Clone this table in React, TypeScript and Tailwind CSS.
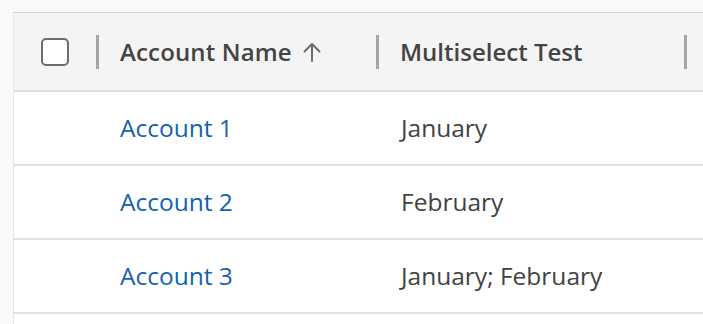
const rows = [
  { name: 'Account 1', months: 'January' },
  { name: 'Account 2', months: 'February' },
  { name: 'Account 3', months: 'January; February' },
];

function SortUpIcon() {
  return (
    <svg width="20" height="22" viewBox="0 0 20 22" fill="none" aria-hidden="true">
      <path d="M10 20V3M2.5 10.5L10 3l7.5 7.5" stroke="#6b6b6b" strokeWidth="2" strokeLinecap="round" strokeLinejoin="round" />
    </svg>
  );
}

function Separator() {
  return <span className="h-[34px] w-[3px] shrink-0 bg-[#a3a3a3]" />;
}

export default function App() {
  return (
    <div className="h-[324px] w-[703px] overflow-hidden bg-[#f8f9fa] pl-[13px] pt-[12px] font-['Open_Sans',sans-serif]">
      <div className="h-full overflow-hidden border-l border-t border-l-[#e6e6e6] border-t-[#d4d4d4] bg-white">
        <div className="flex h-[79px] items-center border-b-2 border-[#e0e0e0] bg-[#f4f4f4] text-[24px] font-semibold text-[#444444]">
          <div className="flex w-[85px] shrink-0 items-center justify-between pl-[27px]">
            <span className="h-[28px] w-[28px] rounded-[5px] border-2 border-[#6e6e6e] bg-white" />
            <Separator />
          </div>
          <div className="flex w-[280px] shrink-0 items-center justify-between pl-[21px]">
            <span className="flex items-center gap-[10px] tracking-[0.15px]">
              Account Name
              <SortUpIcon />
            </span>
            <Separator />
          </div>
          <div className="flex w-[308px] shrink-0 items-center justify-between pl-[21px]">
            <span>Multiselect Test</span>
            <Separator />
          </div>
        </div>
        {rows.map((row) => (
          <div key={row.name} className="flex h-[74px] items-center border-b-2 border-[#e0e0e0] text-[24.5px]">
            <div className="w-[85px] shrink-0" />
            <div className="w-[280px] shrink-0 pl-[21px] text-[#1461b0]">{row.name}</div>
            <div className="pl-[22px] text-[#424242]">{row.months}</div>
          </div>
        ))}
      </div>
    </div>
  );
}
